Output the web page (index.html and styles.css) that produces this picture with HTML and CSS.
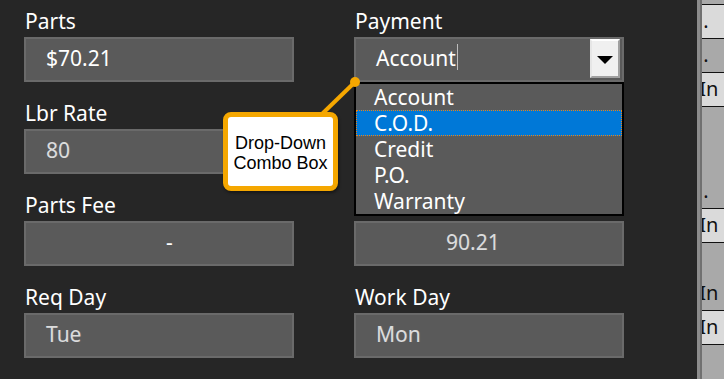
FILE: index.html
```html
<!DOCTYPE html>
<html lang="en">
<head>
    <meta charset="UTF-8">
    <meta name="viewport" content="width=device-width, initial-scale=1.0">
    <title>Invoice - Payment</title>
    <link rel="stylesheet" href="styles.css">
</head>
<body>
    <div class="screen">
        <div class="form">
            <div class="field">
                <div class="label">Parts</div>
                <div class="box bright">$70.21</div>
            </div>
            <div class="field">
                <div class="label">Payment</div>
                <div class="box combo">
                    <span class="combo-text">Account</span><span class="caret"></span>
                    <span class="combo-btn"><span class="arrow"></span></span>
                    <!-- Open drop-down list -->
                    <div class="combo-list">
                        <div class="combo-item">Account</div>
                        <div class="combo-item selected">C.O.D.</div>
                        <div class="combo-item">Credit</div>
                        <div class="combo-item">P.O.</div>
                        <div class="combo-item">Warranty</div>
                    </div>
                </div>
            </div>

            <div class="field">
                <div class="label">Lbr Rate</div>
                <div class="box dim">80</div>
            </div>
            <div class="field">
                <div class="label"></div>
                <div class="box"></div>
            </div>

            <div class="field">
                <div class="label">Parts Fee</div>
                <div class="box bright fee">-</div>
            </div>
            <div class="field">
                <div class="label"></div>
                <div class="box dim total">90.21</div>
            </div>

            <div class="field">
                <div class="label">Req Day</div>
                <div class="box dim">Tue</div>
            </div>
            <div class="field">
                <div class="label">Work Day</div>
                <div class="box dim">Mon</div>
            </div>
        </div>

        <!-- Edge of the grid behind the form -->
        <div class="side-grid">
            <div class="cell grey top"></div>
            <div class="cell light">.</div>
            <div class="cell grey">.</div>
            <div class="cell light clip">In</div>
            <div class="cell grey tall">.</div>
            <div class="cell light clip">In</div>
            <div class="cell grey mid clip">In</div>
            <div class="cell light clip">In</div>
            <div class="cell grey rest"></div>
        </div>

        <!-- Callout -->
        <svg class="leader" width="724" height="379" viewBox="0 0 724 379">
            <line x1="322" y1="114" x2="355" y2="82" stroke="#f5a700" stroke-width="4"/>
            <circle cx="355" cy="82" r="5" fill="#f5a700"/>
        </svg>
        <div class="callout">Drop-Down<br>Combo Box</div>
    </div>
</body>
</html>
```

FILE: styles.css
```css
body {
    margin: 0;
    background-color: #262626;
    font-family: "Noto Sans", "Open Sans", sans-serif;
}

.screen {
    position: relative;
    display: flex;
    width: 724px;
    height: 379px;
    overflow: hidden;
}

.form {
    display: grid;
    grid-template-columns: 270px 270px;
    grid-auto-rows: 82px;
    column-gap: 60px;
    row-gap: 10px;
    padding-left: 24px;
    width: 678px;
}

.label {
    box-sizing: border-box;
    height: 37px;
    padding: 6px 0 0 1px;
    font-size: 21px;
    line-height: 31px;
    color: #fff;
}

.box {
    box-sizing: border-box;
    height: 45px;
    padding-left: 20px;
    background-color: #5a5a5a;
    border: 2px solid #6a6a6a;
    font-size: 21px;
    line-height: 38px;
    white-space: nowrap;
}

.bright {
    color: #fff;
}

.dim {
    color: #dcdcdc;
    text-shadow: 1px 0 0 rgba(110, 122, 140, 0.5);
}

.fee {
    padding-left: 140px;
}

.total {
    padding-left: 90px;
}

/* Combo box */
.combo {
    position: relative;
    display: flex;
    align-items: flex-start;
    color: #fff;
}

.caret {
    width: 1px;
    height: 26px;
    margin: 5px 0 0 1px;
    background-color: #bdbdbd;
}

.combo-btn {
    position: absolute;
    top: 0;
    right: 2px;
    box-sizing: border-box;
    width: 30px;
    height: 39px;
    background-color: #f0f0f0;
    border: 2px solid;
    border-color: #fff #a0a0a0 #a0a0a0 #e6e6e6;
    display: flex;
    justify-content: center;
    align-items: center;
}

.arrow {
    width: 0;
    height: 0;
    border-left: 8px solid transparent;
    border-right: 8px solid transparent;
    border-top: 8px solid #000;
    margin-top: 2px;
}

.combo-list {
    position: absolute;
    top: 43px;
    left: -2px;
    z-index: 2;
    box-sizing: border-box;
    width: 270px;
    height: 134px;
    background-color: #5a5a5a;
    border: 2px solid #000;
}

.combo-item {
    box-sizing: border-box;
    height: 26px;
    padding-left: 18px;
    font-size: 21px;
    line-height: 27px;
    color: #fff;
}

.combo-item.selected {
    background-color: #0078d7;
    border: 1px dotted #f0820f;
    padding-left: 17px;
    line-height: 25px;
}

/* Grid at right edge */
.side-grid {
    display: flex;
    flex-direction: column;
    width: 22px;
    border-left: 3px solid #8c8c8c;
    box-shadow: inset 2px 0 0 #707070;
    padding-left: 2px;
    background-color: #a9a9a9;
    font-family: "Noto Sans", sans-serif;
    font-size: 20px;
    color: #111;
}

.cell {
    box-sizing: border-box;
    height: 34px;
    border-bottom: 1px solid #111;
    line-height: 26px;
    display: flex;
    align-items: flex-end;
    padding: 0 0 4px 1px;
    overflow: hidden;
    white-space: nowrap;
}

.cell.light {
    background-color: #dadada;
}

.cell.grey {
    background-color: #a9a9a9;
}

.cell.clip {
    padding-left: 0;
    text-indent: -3px;
}

.cell.top {
    height: 5px;
    padding: 0;
}

.cell.tall {
    height: 102px;
}

.cell.mid {
    height: 68px;
}

.cell.rest {
    flex: 1;
    border: none;
}

/* Callout */
.leader {
    position: absolute;
    top: 0;
    left: 0;
    z-index: 3;
}

.callout {
    position: absolute;
    top: 112px;
    left: 223px;
    z-index: 3;
    box-sizing: border-box;
    width: 115px;
    height: 79px;
    background-color: #fff;
    border: 5px solid #f5a700;
    border-radius: 8px;
    box-shadow: 1px 2px 3px rgba(0, 0, 0, 0.4);
    display: flex;
    align-items: center;
    justify-content: center;
    padding-top: 3px;
    font-family: "Liberation Sans", Arial, sans-serif;
    font-size: 18px;
    line-height: 20px;
    text-align: center;
    color: #000;
}
```
